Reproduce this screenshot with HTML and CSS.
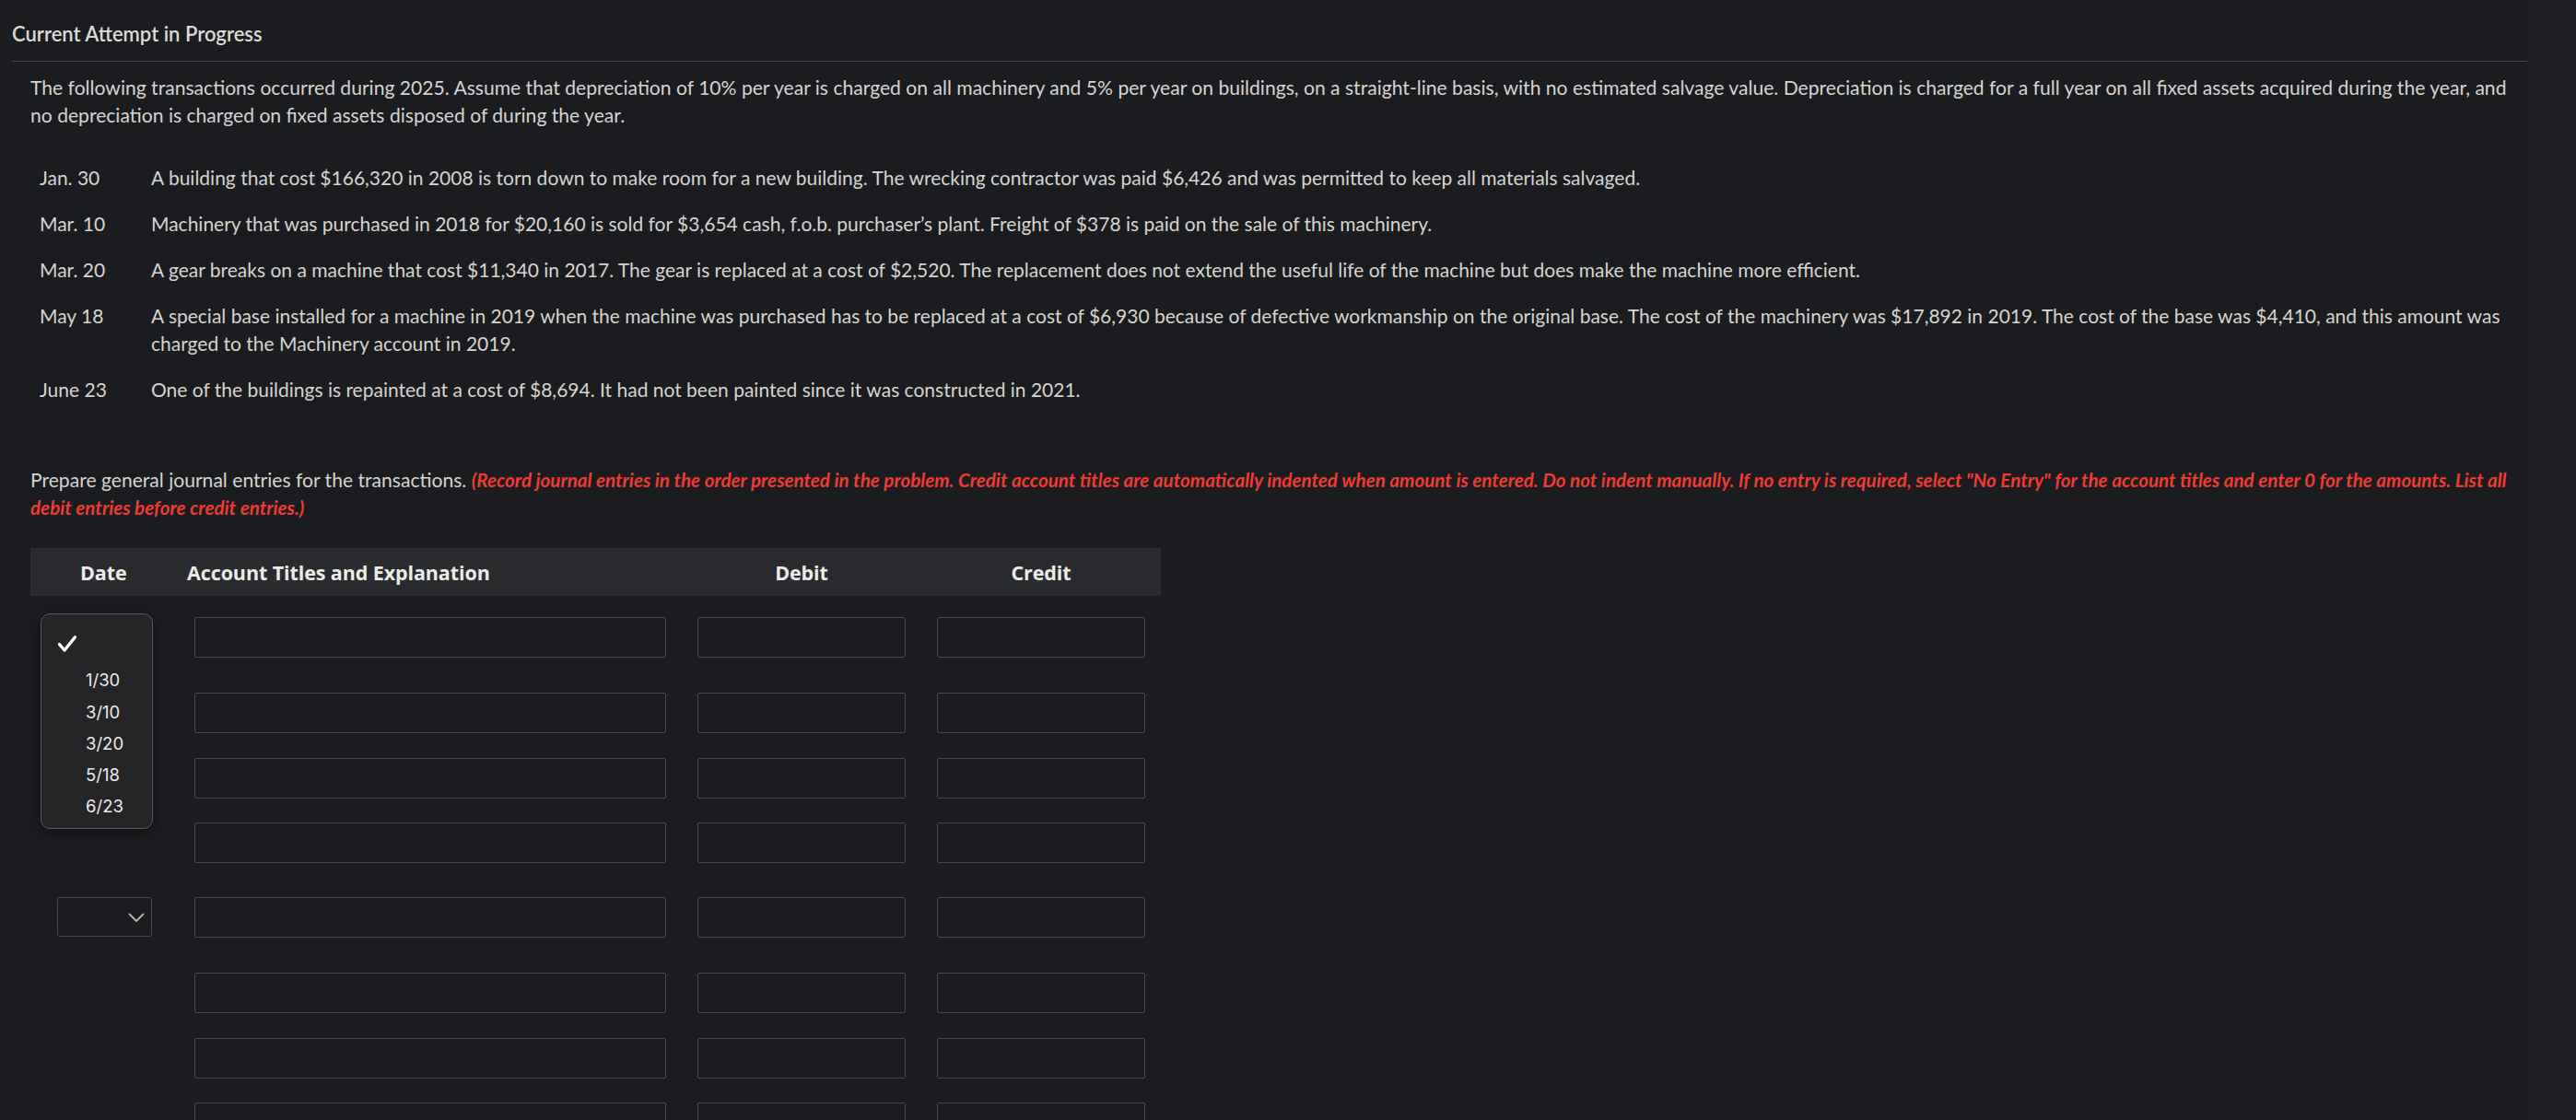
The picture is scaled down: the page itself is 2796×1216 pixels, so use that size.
FILE: index.html
```html
<!DOCTYPE html>
<html lang="en">
<head>
<meta charset="utf-8">
<title>Current Attempt in Progress</title>
<link rel="stylesheet" href="styles.css">
</head>
<body>
<div class="page">
  <main class="main">
    <h1 class="title">Current Attempt in Progress</h1>
    <div class="content">
      <p class="intro">The following transactions occurred during 2025. Assume that depreciation of 10% per year is charged on all machinery and 5% per year on buildings, on a straight-line basis, with no estimated salvage value. Depreciation is charged for a full year on all fixed assets acquired during the year, and no depreciation is charged on fixed assets disposed of during the year.</p>
      <div class="txns">
        <div class="txn"><div class="txn-date">Jan. 30</div><div class="txn-desc">A building that cost $166,320 in 2008 is torn down to make room for a new building. The wrecking contractor was paid $6,426 and was permitted to keep all materials salvaged.</div></div>
        <div class="txn"><div class="txn-date">Mar. 10</div><div class="txn-desc">Machinery that was purchased in 2018 for $20,160 is sold for $3,654 cash, f.o.b. purchaser’s plant. Freight of $378 is paid on the sale of this machinery.</div></div>
        <div class="txn"><div class="txn-date">Mar. 20</div><div class="txn-desc">A gear breaks on a machine that cost $11,340 in 2017. The gear is replaced at a cost of $2,520. The replacement does not extend the useful life of the machine but does make the machine more efficient.</div></div>
        <div class="txn"><div class="txn-date">May 18</div><div class="txn-desc">A special base installed for a machine in 2019 when the machine was purchased has to be replaced at a cost of $6,930 because of defective workmanship on the original base. The cost of the machinery was $17,892 in 2019. The cost of the base was $4,410, and this amount was charged to the Machinery account in 2019.</div></div>
        <div class="txn"><div class="txn-date">June 23</div><div class="txn-desc">One of the buildings is repainted at a cost of $8,694. It had not been painted since it was constructed in 2021.</div></div>
      </div>
      <p class="instr"><span>Prepare general journal entries for the transactions.</span> <em class="red">(Record journal entries in the order presented in the problem. Credit account titles are automatically indented when amount is entered. Do not indent manually. If no entry is required, select "No Entry" for the account titles and enter 0 for the amounts. List all debit entries before credit entries.)</em></p>

      <div class="journal">
        <div class="jhead">
          <div class="c-date h-date">Date</div>
          <div class="c-acct h-acct">Account Titles and Explanation</div>
          <div class="c-debit h-num">Debit</div>
          <div class="c-credit h-num">Credit</div>
        </div>

        <div class="entry">
          <div class="jrow first">
            <div class="c-date">
              <div class="select"></div>
              <div class="menu">
                <div class="menu-item checked"><svg class="check" width="20" height="18" viewBox="0 0 20 18"><polyline points="1.5,9.5 7,16 18.5,1.8" fill="none" stroke="#ffffff" stroke-width="3.4" stroke-linecap="round" stroke-linejoin="round"/></svg></div>
                <div class="menu-item">1/30</div>
                <div class="menu-item">3/10</div>
                <div class="menu-item">3/20</div>
                <div class="menu-item">5/18</div>
                <div class="menu-item">6/23</div>
              </div>
            </div>
            <div class="c-acct"><div class="input wide"></div></div>
            <div class="c-debit"><div class="input"></div></div>
            <div class="c-credit"><div class="input"></div></div>
          </div>
          <div class="jrow">
            <div class="c-date"></div>
            <div class="c-acct"><div class="input wide"></div></div>
            <div class="c-debit"><div class="input"></div></div>
            <div class="c-credit"><div class="input"></div></div>
          </div>
          <div class="jrow">
            <div class="c-date"></div>
            <div class="c-acct"><div class="input wide"></div></div>
            <div class="c-debit"><div class="input"></div></div>
            <div class="c-credit"><div class="input"></div></div>
          </div>
          <div class="jrow">
            <div class="c-date"></div>
            <div class="c-acct"><div class="input wide"></div></div>
            <div class="c-debit"><div class="input"></div></div>
            <div class="c-credit"><div class="input"></div></div>
          </div>
        </div>

        <div class="entry">
          <div class="jrow first">
            <div class="c-date">
              <div class="select"><svg class="chev" width="18" height="11" viewBox="0 0 18 11"><polyline points="1.5,1.5 9,9 16.5,1.5" fill="none" stroke="#b9b6b0" stroke-width="1.8" stroke-linecap="round" stroke-linejoin="round"/></svg></div>
            </div>
            <div class="c-acct"><div class="input wide"></div></div>
            <div class="c-debit"><div class="input"></div></div>
            <div class="c-credit"><div class="input"></div></div>
          </div>
          <div class="jrow">
            <div class="c-date"></div>
            <div class="c-acct"><div class="input wide"></div></div>
            <div class="c-debit"><div class="input"></div></div>
            <div class="c-credit"><div class="input"></div></div>
          </div>
          <div class="jrow">
            <div class="c-date"></div>
            <div class="c-acct"><div class="input wide"></div></div>
            <div class="c-debit"><div class="input"></div></div>
            <div class="c-credit"><div class="input"></div></div>
          </div>
          <div class="jrow">
            <div class="c-date"></div>
            <div class="c-acct"><div class="input wide"></div></div>
            <div class="c-debit"><div class="input"></div></div>
            <div class="c-credit"><div class="input"></div></div>
          </div>
        </div>
      </div>
    </div>
  </main>
  <div class="side"></div>
</div>
</body>
</html>
```

FILE: styles.css
```css
html, body {
  margin: 0;
  padding: 0;
  height: 100%;
  overflow: hidden;
  background: #1e1f22;
}

body {
  font-family: Lato, "Noto Sans", sans-serif;
  color: #d6d4d0;
}

.page {
  display: flex;
  height: 100%;
  overflow: hidden;
}

.main {
  width: 2743px;
  flex: none;
  background: #1b1c1f;
  padding-left: 13px;
  box-sizing: border-box;
  overflow: hidden;
}

.side {
  flex: 1;
  background: #1e1f22;
}

.title {
  margin: 0;
  padding-top: 24px;
  height: 42px;
  font-size: 22px;
  font-weight: 600;
  line-height: 26px;
  color: #dcdad6;
  border-bottom: 1px solid #48494c;
  box-sizing: content-box;
}

.content {
  padding: 0 20px 0 20px;
}

.intro {
  margin: 13px 0 0 0;
  font-size: 21.1px;
  line-height: 30px;
}

.txns {
  margin-top: 38px;
  padding-left: 10px;
  display: flex;
  flex-direction: column;
  gap: 20px;
}

.txn {
  display: flex;
  font-size: 21px;
  line-height: 30px;
}

.txn-date {
  width: 121px;
  flex: none;
}

.txn-desc {
  flex: 1;
}

.instr {
  margin: 68px 0 0 0;
  font-size: 21.1px;
  line-height: 30px;
}

.red {
  color: #ee3b33;
  font-style: italic;
  font-weight: 700;
  font-size: 20.6px;
  line-height: 30px;
}

.journal {
  margin-top: 29px;
}

.jhead {
  width: 1227px;
  height: 52px;
  background: #2a2b2e;
  display: flex;
  align-items: center;
  font-family: "Open Sans", Lato, sans-serif;
  font-weight: 700;
  font-size: 21.5px;
  letter-spacing: -0.1px;
  color: #ecebe8;
}

.c-date {
  width: 170px;
  flex: none;
  position: relative;
}

.c-acct {
  width: 520px;
  flex: none;
}

.c-debit,
.c-credit {
  width: 226px;
  flex: none;
  margin-left: 34px;
}

.h-date {
  padding-left: 54px;
  box-sizing: border-box;
}

.h-num {
  text-align: center;
}

.entry {
  display: flex;
  flex-direction: column;
  padding-bottom: 10.5px;
}

.jhead + .entry {
  margin-top: 23px;
}

.jrow {
  display: flex;
  height: 44px;
  flex: none;
  margin-bottom: 26.5px;
}

.jrow.first {
  margin-bottom: 38px;
}

.input {
  height: 44px;
  box-sizing: border-box;
  border: 1px solid #47494d;
  border-radius: 2px;
  background: #1b1c1f;
}

.input.wide {
  margin-left: 8px;
}

.select {
  margin-left: 29px;
  width: 103px;
  height: 43px;
  box-sizing: border-box;
  border: 1px solid #47494d;
  border-radius: 3px;
  background: #1b1c1f;
  display: flex;
  align-items: center;
  justify-content: flex-end;
  padding-right: 7px;
  padding-top: 2px;
}

.menu {
  position: absolute;
  left: 11px;
  top: -4px;
  width: 122px;
  height: 234px;
  box-sizing: border-box;
  border: 1px solid #5a5a5d;
  border-radius: 10px;
  background: #252427;
  box-shadow: 0 4px 14px rgba(0, 0, 0, 0.45);
  padding-top: 15px;
  font-family: Inter, "Noto Sans", sans-serif;
  font-size: 18.5px;
  color: #ebebeb;
  z-index: 2;
}

.menu-item {
  height: 34.3px;
  line-height: 34px;
  padding-left: 48px;
}

.menu-item.checked {
  padding-left: 18px;
  display: flex;
  align-items: center;
  margin-bottom: 5px;
}
```
